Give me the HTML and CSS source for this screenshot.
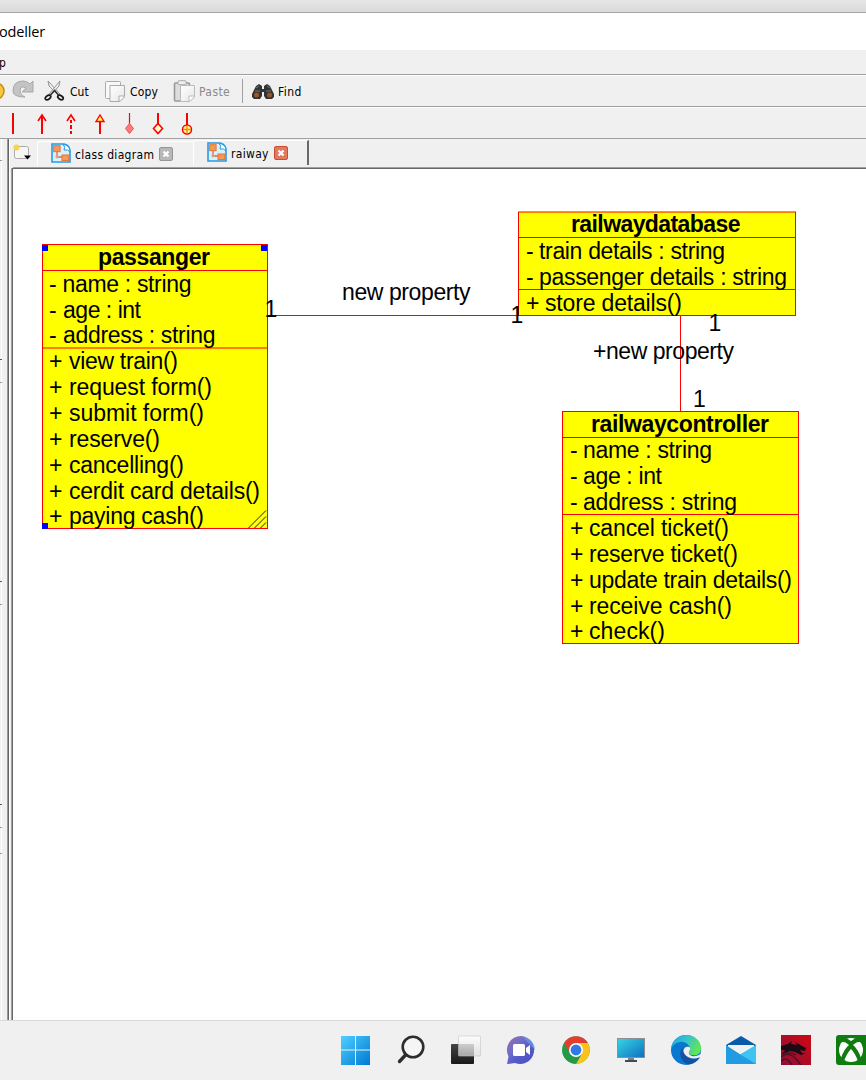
FILE: index.html
```html
<!DOCTYPE html>
<html lang="en">
<head>
<meta charset="utf-8">
<title>Modeller</title>
<link rel="stylesheet" href="styles.css">
</head>
<body>
<svg width="0" height="0" class="defs">
  <defs>
    <linearGradient id="win" x1="0" y1="0" x2="1" y2="1"><stop offset="0" stop-color="#4fd0ff"/><stop offset="1" stop-color="#0078d4"/></linearGradient>
    <linearGradient id="chat" x1="0" y1="0" x2="1" y2="1"><stop offset="0" stop-color="#a266a8"/><stop offset=".35" stop-color="#6f6fc9"/><stop offset=".6" stop-color="#5558c8"/><stop offset="1" stop-color="#4f4fc4"/></linearGradient>
    <linearGradient id="screen" x1="0" y1="0" x2="1" y2="1"><stop offset="0" stop-color="#38d6e0"/><stop offset="1" stop-color="#0c6fc4"/></linearGradient>
    <linearGradient id="edge" x1="0" y1="0" x2="1" y2=".4"><stop offset="0" stop-color="#1ba3df"/><stop offset=".5" stop-color="#33c3d0"/><stop offset="1" stop-color="#62e35a"/></linearGradient>
    <linearGradient id="dark" x1="0" y1="0" x2="0" y2="1"><stop offset="0" stop-color="#444"/><stop offset="1" stop-color="#191919"/></linearGradient>
    <linearGradient id="glass" x1="0" y1="0" x2="0" y2="1"><stop offset="0" stop-color="#fff" stop-opacity=".85"/><stop offset="1" stop-color="#ddd" stop-opacity=".7"/></linearGradient>
    <linearGradient id="page" x1="0" y1="0" x2="1" y2="1"><stop offset="0" stop-color="#fff"/><stop offset="1" stop-color="#e6e6e6"/></linearGradient>
    <linearGradient id="red" x1="0" y1="1" x2="1" y2="0"><stop offset="0" stop-color="#8c1035"/><stop offset="1" stop-color="#cf0812"/></linearGradient>
    <symbol id="diagram" viewBox="0 0 20 20">
      <path d="M1 1H13Q19 2 19 9V19H1Z" fill="#d9f1fc" stroke="#279be4" stroke-width="1.600"/>
      <path d="M12 1.500Q15 4 13 7Q17 6 19 9Q19 2 12 1.500Z" fill="#fff" stroke="#279be4"/>
      <path d="M6 8V14H11" fill="none" stroke="#c96d5a" stroke-width="1.300"/>
      <rect x="2.700" y="2.700" width="6.400" height="6" fill="#f29a5c" stroke="#e9722e"/>
      <rect x="11" y="12" width="6.800" height="5.600" fill="#f29a5c" stroke="#e9722e"/>
      <circle cx="6" cy="13.800" r="1.600" fill="#e99a8a"/>
    </symbol>
  </defs>
</svg>
<div class="window">
  <div class="backdrop"></div>
  <header class="title"><span>odeller</span></header>
  <nav class="menu"><span>p</span></nav>
  <div class="toolbar">
    <svg class="undo" width="6" height="22"><circle cx="-4" cy="11" r="8" fill="#f8c842" stroke="#c98a10" stroke-width="1.500"/></svg>
    <svg class="redo" width="23" height="22"><path d="M1 11Q1 1 11 1Q15 1 18 4L21 1V12H10L14 8Q9 5 8 10Q8 15 13 17Q1 17 1 11Z" fill="#c4c4c4" stroke="#a7a7a7"/></svg>
    <svg class="cut" width="22" height="22"><path d="M4 1L5 6L15 16L16 14Z" fill="#eee" stroke="#8b8b8b" stroke-width=".9"/><path d="M16 1L15 6L6 16L5 14Z" fill="#eee" stroke="#8b8b8b" stroke-width=".9"/><ellipse cx="4" cy="17.500" rx="3" ry="1.900" transform="rotate(-35 4 17.500)" fill="none" stroke="#181818" stroke-width="1.700"/><ellipse cx="16.500" cy="17.500" rx="3" ry="1.900" transform="rotate(35 16.500 17.500)" fill="none" stroke="#181818" stroke-width="1.700"/><path d="M6.500 15L10.500 10.500L14.500 15" fill="none" stroke="#333" stroke-width="1.600"/></svg>
    <span class="cap">Cut</span>
    <svg class="copy" width="21" height="23"><rect x=".5" y="1.500" width="15" height="17" rx="1" fill="#f8f8f8" stroke="#aaa"/><path d="M5 5.500H19.500V17L15 21.500H5Z" fill="url(#page)" stroke="#aaa"/><path d="M14 21V16H19.500" fill="#fff" stroke="#aaa"/></svg>
    <span class="cap">Copy</span>
    <svg class="paste" width="22" height="23"><rect x="1.500" y="3" width="15" height="18" rx="1" fill="#ddd" stroke="#999" stroke-width="1.600"/><rect x="5" y=".700" width="8" height="4" rx="1" fill="#eee" stroke="#aaa"/><path d="M7.500 5.500H21.500V17L17 21.500H7.500Z" fill="url(#page)" stroke="#bbb"/><path d="M16 21V16H21.500" fill="#fff" stroke="#bbb"/></svg>
    <span class="cap off">Paste</span>
    <i class="sep"></i>
    <svg class="find" width="22" height="15"><path d="M0 10L4 2L7 0L10 2V5H12V2L15 0L18 2L22 10V13L20 15H14L12 12V8H10V12L8 15H2L0 13Z" fill="#333"/><path d="M4 4L7 2M15 2L18 4M3 7H8M14 7H19" stroke="#777" fill="none"/><circle cx="4.500" cy="11" r="2.500" fill="#9c5423"/><circle cx="17.500" cy="11" r="2.500" fill="#9c5423"/></svg>
    <span class="cap">Find</span>
  </div>
  <div class="arrows">
    <svg width="200" height="24" fill="none" stroke="#f00" stroke-width="2">
      <path d="M13 0V21M42 2V21M71 7V10M71 12V16M71 18V21M100 9V21M158 0V11M187 0V13"/>
      <path d="M129.500 0V11" stroke-width="1.200"/>
      <path d="M38 8L42 2L46 8M67 8L71 2L75 8" stroke-width="1.600"/>
      <path d="M96 8.500L100 2L104 8.500Z" fill="#ff5" stroke-width="1.400"/>
      <path d="M129.500 10.500L133.500 15.500L129.500 20.500L125.500 15.500Z" fill="#ff7c7c" stroke="#e85050" stroke-width="1"/>
      <path d="M158 10.500L162.500 15.500L158 20.500L153.500 15.500Z" fill="#ffc" stroke-width="1.600"/>
      <circle cx="187" cy="16.500" r="4.500" fill="#ff9" stroke-width="1.500"/><path d="M187 12.500V20.500M183 16.500H191" stroke="#f80" stroke-width="1.400"/>
    </svg>
  </div>
  <main class="work">
    <aside class="tree">
      <svg width="13" height="882">
        <rect width="3" height="882" fill="#f0f0f0"/><path d="M1.500 0V882" stroke="#fff"/>
        <path d="M0 21.500H2M0 243.500H2M0 465.500H2M0 688.500H2M0 714.500H2" stroke="#999"/>
        <path d="M0 220.500H2M0 442.500H2M0 665.500H2" stroke="#555"/>
        <path d="M7.500 0V882" stroke="#999"/><path d="M8.500 0V882" stroke="#666"/><path d="M9.500 0V882" stroke="#fff"/>
        <path d="M11.500 29V882" stroke="#a0a0a0"/><path d="M12.500 29V882" stroke="#696969"/>
      </svg>
    </aside>
    <section class="editor">
      <div class="tabs">
        <svg class="new" width="20" height="17"><rect x="2.500" y="2.500" width="14" height="12" rx="2" fill="#f6f6f6" stroke="#aaa"/><circle cx="4.500" cy="3.500" r="3" fill="#f7d44a"/><path d="M12 11.500H19L15.500 15.500Z" fill="#000"/></svg>
        <div class="tab"><svg width="20" height="20"><use href="#diagram"/></svg><span>class diagram</span><svg class="close" width="14" height="14"><rect x=".500" y=".500" width="13" height="13" rx="1.500" fill="#b8b8b8" stroke="#969696"/><path d="M4.500 4.500L9.500 9.500M9.500 4.500L4.500 9.500" stroke="#fff" stroke-width="2.200"/></svg></div>
        <div class="tab active"><svg width="20" height="20"><use href="#diagram"/></svg><span>raiway</span><svg class="close" width="14" height="14"><rect x=".500" y=".500" width="13" height="13" rx="1.500" fill="#e5795d" stroke="#c94d32"/><path d="M4.500 4.500L9.500 9.500M9.500 4.500L4.500 9.500" stroke="#fff" stroke-width="2.200"/></svg></div>
      </div>
      <svg class="canvas" width="853" height="851" viewBox="13 169 853 851">
        <g class="node">
          <rect x="42.500" y="244.500" width="225" height="284"/><path d="M42 270.500H267M42 348H267"/>
          <rect x="518.500" y="212" width="277" height="103.500"/><path d="M518 237.500H795M518 289.500H795"/>
          <rect x="562.500" y="411.500" width="236" height="232"/><path d="M562 437.500H798M562 514.500H798"/>
          <path d="M267 315.500H518M680.500 316V411"/>
        </g>
        <path d="M248.500 528L266 510.500M254.500 528L266 516.500M260.500 528L266 522.500" stroke="#222"/>
        <path d="M42 245h6v6h-6zM261 245h6v6h-6zM42 523h6v6h-6z" fill="#00f"/>
        <g class="name">
          <text x="98" y="265" textLength="112">passanger</text>
          <text x="571" y="232" textLength="169.500">railwaydatabase</text>
          <text x="591" y="432" textLength="178">railwaycontroller</text>
        </g>
        <g class="member">
          <text x="49" y="292">-</text><text x="62.500" y="292" textLength="129">name : string</text>
          <text x="49" y="318">-</text><text x="63" y="318" textLength="78">age : int</text>
          <text x="49" y="343">-</text><text x="63" y="343" textLength="152.500">address : string</text>
          <text x="49" y="369">+</text><text x="69" y="369" textLength="109">view train()</text>
          <text x="49" y="395">+</text><text x="69" y="395" textLength="143">request form()</text>
          <text x="49" y="421">+</text><text x="69" y="421" textLength="135">submit form()</text>
          <text x="49" y="447">+</text><text x="69" y="447" textLength="91">reserve()</text>
          <text x="49" y="473">+</text><text x="69" y="473" textLength="115">cancelling()</text>
          <text x="49" y="499">+</text><text x="69" y="499" textLength="191">cerdit card details()</text>
          <text x="49" y="524">+</text><text x="69" y="524" textLength="135">paying cash()</text>

          <text x="526" y="259">-</text><text x="539" y="259" textLength="186">train details : string</text>
          <text x="526" y="285">-</text><text x="539" y="285" textLength="248">passenger details : string</text>
          <text x="526" y="311">+</text><text x="545" y="311" textLength="137">store details()</text>

          <text x="570" y="458">-</text><text x="583" y="458" textLength="129">name : string</text>
          <text x="570" y="484">-</text><text x="583" y="484" textLength="79">age : int</text>
          <text x="570" y="510">-</text><text x="583" y="510" textLength="154">address : string</text>
          <text x="570" y="536">+</text><text x="589" y="536" textLength="140">cancel ticket()</text>
          <text x="570" y="562">+</text><text x="589" y="562" textLength="149">reserve ticket()</text>
          <text x="570" y="588">+</text><text x="589" y="588" textLength="203">update train details()</text>
          <text x="570" y="614">+</text><text x="589" y="614" textLength="143">receive cash()</text>
          <text x="570" y="639">+</text><text x="589" y="639" textLength="76">check()</text>

          <text x="342" y="300" textLength="128.500">new property</text>
          <text x="593" y="359" textLength="141">+new property</text>
          <text x="264.500" y="317">1</text><text x="510.500" y="323">1</text><text x="708.500" y="331">1</text><text x="693" y="407">1</text>
        </g>
      </svg>
    </section>
  </main>
  <footer class="taskbar">
    <svg viewBox="0 0 30 30"><path d="M0 1H14V14.500H0ZM15 1H29V14.500H15ZM0 15.500H14V30H0ZM15 15.500H29V30H15Z" fill="url(#win)"/></svg>
    <svg viewBox="0 0 30 30"><circle cx="17" cy="12" r="10.300" fill="#f5f5f5" stroke="#2d2d2d" stroke-width="2.600"/><path d="M9.500 20L3.500 26.500" stroke="#2d2d2d" stroke-width="3.400" stroke-linecap="round"/></svg>
    <svg viewBox="0 0 30 30"><rect x="0" y="9" width="23" height="20" rx="1" fill="url(#dark)"/><rect x="7.500" y="1" width="22" height="20" rx="1" fill="url(#glass)" stroke="#c4c4c4" stroke-opacity=".6"/></svg>
    <svg viewBox="0 0 30 30"><path d="M15 1A14 14 0 1 1 9 28L1 29L2.500 21.500A14 14 0 0 1 15 1Z" fill="url(#chat)"/><path d="M17 1.500A14 14 0 0 1 29 15L22 8Z" fill="#6d9bea" opacity=".7"/><rect x="7" y="9" width="12" height="12" rx="1.500" fill="#fff"/><path d="M20 13L24 10V20L20 17Z" fill="#fff"/></svg>
    <svg viewBox="0 0 30 30"><circle cx="15" cy="15" r="13.800" fill="#34a853"/><path d="M15 15L3.050 8.100A13.800 13.800 0 0 1 26.950 8.100H15Z" fill="#e53c30"/><path d="M15 8.100H26.950A13.800 13.800 0 0 1 15 28.800L21 18.500Z" fill="#fcc31d"/><path d="M3.050 8.100L9 18.500L15 15L12 8.100Z" fill="#e53c30"/><path d="M3.050 8.100A13.800 13.800 0 0 0 15 28.800L21 18.500Q15 24 9 18.500Z" fill="#249a48"/><circle cx="15" cy="15" r="7" fill="#fff"/><circle cx="15" cy="15" r="5.400" fill="#2f7ae5"/></svg>
    <svg viewBox="0 0 30 30"><path d="M12 22H18V25H12Z" fill="#7a7f88"/><rect x="9" y="25" width="12" height="2" fill="#454951"/><rect x="1.500" y="3.500" width="27" height="19" fill="url(#screen)" stroke="#8b9097"/></svg>
    <svg viewBox="0 0 30 30"><circle cx="15" cy="15" r="15" fill="#0877cf"/><path d="M0 14C1 5 8 0 15 0C24 0 30 6 30 13C30 19 26 21 22 20C18 20 17 18 19 16C20 10 14 6 9 7C4 8 1 11 0 14Z" fill="url(#edge)"/><path d="M12 12C7 17 9 26 17 29.500C23 29 27 26 29 22C24 25 19 24 16 21C12 18 11 15 12 12Z" fill="#1252a1"/><path d="M12.500 15Q14 10.500 18.500 12Q20 14 18.500 16Q17 18.500 19 20Q23 23 30 19L29 22Q23 25 17 22Q12 19 12.500 15Z" fill="#eee"/></svg>
    <svg viewBox="0 0 30 30"><path d="M0 10L15 1L30 10V16H0Z" fill="#085ba8"/><path d="M2 10H28V19L15 24L2 16Z" fill="#f1f1f1"/><path d="M0 10L15 20V29H0Z" fill="#2ba4e8"/><path d="M30 10L13 20L15 29H30Z" fill="#3dc4f2"/><path d="M0 29V11L30 29Z" fill="#219be2"/></svg>
    <svg viewBox="0 0 30 30"><rect width="30" height="30" fill="url(#red)"/><path d="M0 11L7 9L11 6L10 9L16 10L14 7L21 11L25 13L24 16L19 15L21 18L25 18L20 20L14 17L9 16L0 20L4 15L0 15Z" fill="#180b16"/><path d="M0 22Q8 16 15 24T19 30M0 26Q6 21 11 30M3 18Q10 17 15 20" fill="none" stroke="#461026" stroke-width="1.200"/></svg>
    <svg viewBox="0 0 30 30"><rect width="32" height="30" rx="3" fill="#107c10"/><circle cx="15" cy="15" r="12" fill="#fff"/><path d="M6 4Q10 2 15 6Q20 2 24 4L26 7Q21 6 17 10Q22 14 25 23L22 26Q19 18 15 14Q11 18 8 26L5 23Q8 14 13 10Q9 6 4 7Z" fill="#107c10"/></svg>
  </footer>
</div>
</body>
</html>
```
FILE: styles.css
```css
* { box-sizing: border-box; }
body { margin: 0; overflow: hidden; background: #f0f0f0; color: #000; font: 12px "DejaVu Sans Condensed", "DejaVu Sans", sans-serif; font-stretch: condensed; }
.defs { position: absolute; }
.window { width: 866px; height: 1080px; display: flex; flex-direction: column; overflow: hidden; }
.window svg { display: block; flex: none; }
.backdrop { height: 13px; flex: none; background: linear-gradient(#e6e6e6, #dadada); border-bottom: 1px solid #a6a6a6; }
.title { height: 37px; flex: none; background: #fff; padding-top: 9px; font: 14.5px/20px "Open Sans", sans-serif; letter-spacing: -0.15px; }
.title span { margin-left: -1px; }
.menu { height: 25px; flex: none; border-bottom: 1px solid #a0a0a0; line-height: 26px; }
.menu span { margin-left: -1px; }
.toolbar { height: 32px; flex: none; display: flex; align-items: center; border-top: 1px solid #fff; border-bottom: 1px solid #a0a0a0; }
.redo { margin-left: 6px; }
.cut { margin-left: 9px; }
.cap { margin-top: 1px; }
.cut + .cap { width: 39px; padding-left: 4px; }
.copy + .cap { width: 47px; padding-left: 4px; letter-spacing: 0.15px; }
.paste + .cap { width: 47px; padding-left: 4px; letter-spacing: 0.4px; }
.off { color: #8a8a8a; }
.sep { width: 1px; height: 24px; background: #a0a0a0; }
.find { margin-left: 9px; }
.find + .cap { margin-left: 4px; letter-spacing: 0.4px; }
.arrows { height: 32px; flex: none; border-top: 1px solid #fff; border-bottom: 1px solid #a0a0a0; padding-top: 5px; }
.work { flex: 1; display: flex; min-height: 0; }
.tree { width: 13px; flex: none; }
.editor { flex: 1; min-width: 0; }
.tabs { height: 30px; display: flex; align-items: flex-start; border-bottom: 1px solid #696969; box-shadow: inset 0 -1px #a0a0a0; }
.new { margin: 5px 5px 0 -1px; }
.tab { height: 25px; margin-top: 2px; width: 156px; display: flex; align-items: center; padding-left: 13px; border-left: 1px solid #fff; border-top: 1px solid #fff; border-radius: 3px 0 0; }
.tab > svg:first-child { margin-top: -2px; }
.tab span { margin: 2px 0 0 4px; letter-spacing: 0.32px; }
.tab .close { margin-left: 5px; }
.active { width: 116px; margin-top: 1px; height: 25px; border-right: 2px solid #696969; }
.canvas { background: #fff; }
.node { fill: #ff0; stroke: #f00; stroke-width: 1; }
.name { font: bold 23px "Liberation Sans", Arial, sans-serif; }
.member { font: 23px "Liberation Sans", Arial, sans-serif; }
.taskbar { height: 60px; flex: none; background: #f0f0f0; border-top: 1px solid #d9d9d9; display: flex; gap: 25px; align-items: center; padding: 0 0 2px 341px; }
.taskbar svg { width: 30px; height: 30px; }
```
